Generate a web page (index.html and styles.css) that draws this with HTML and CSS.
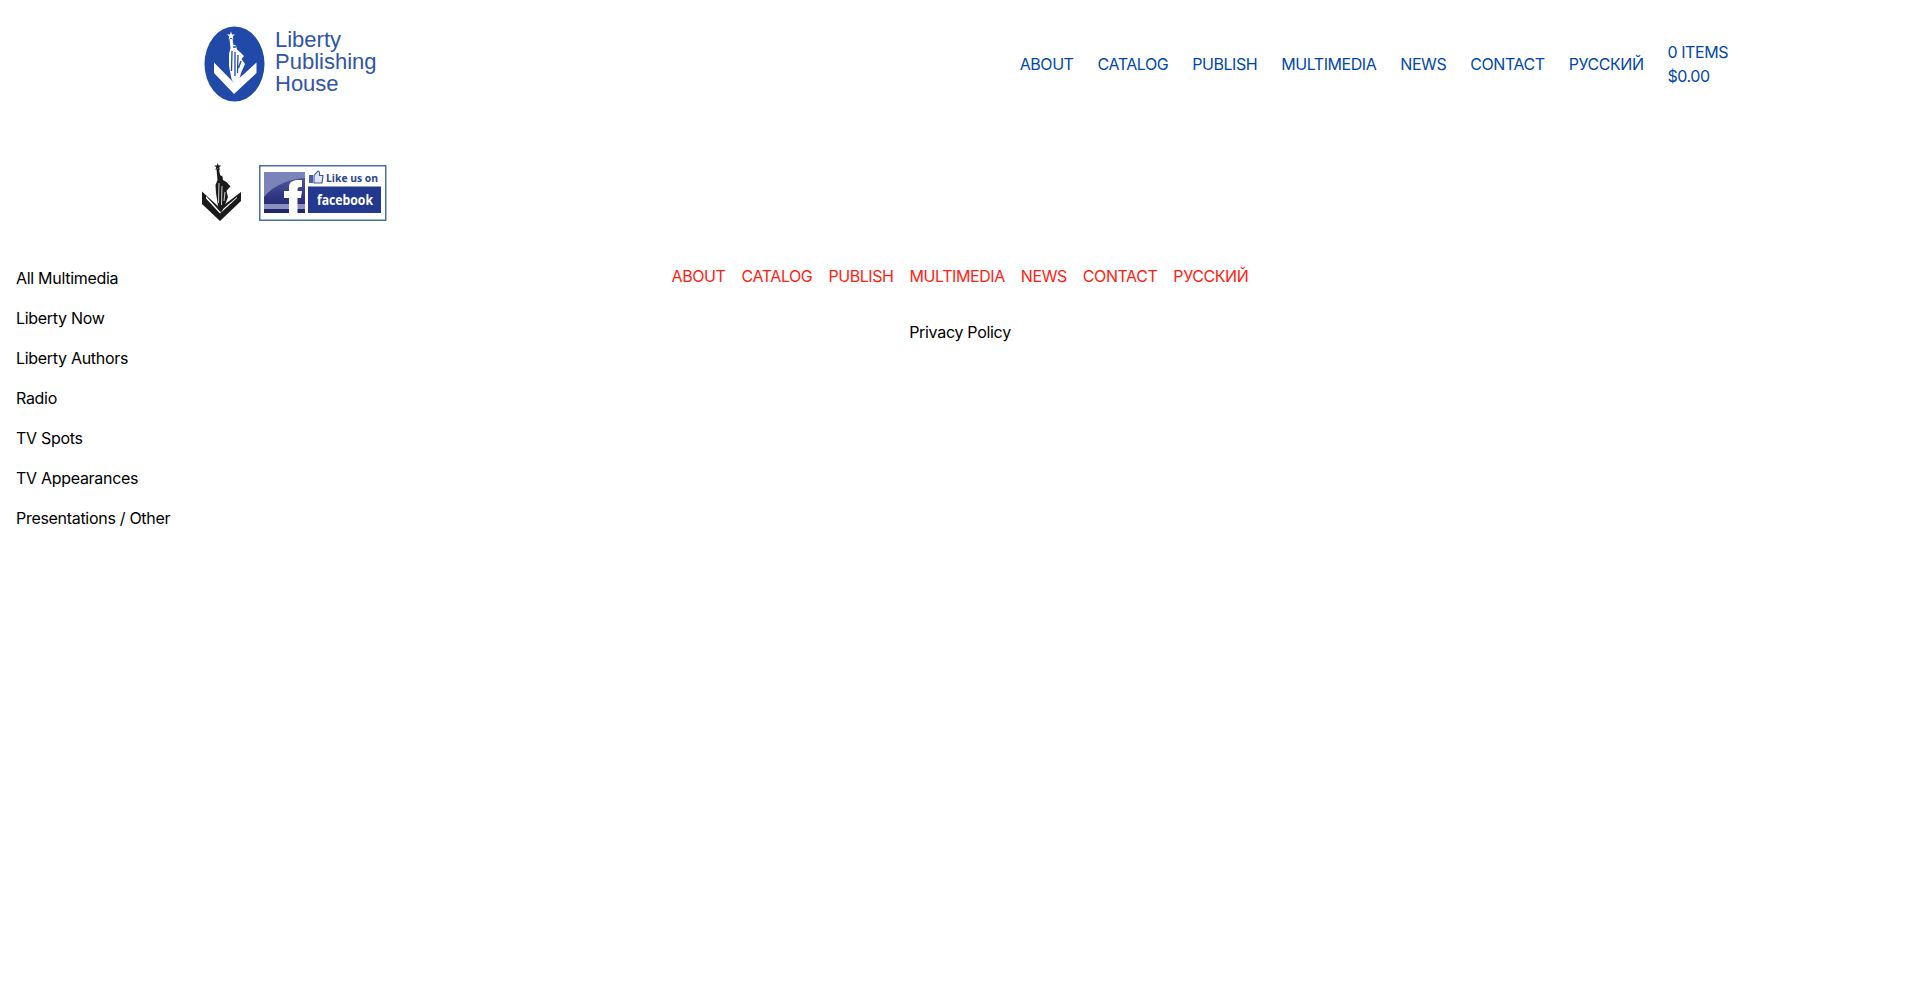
FILE: index.html
```html
<!DOCTYPE html>
<html lang="en">
<head>
<meta charset="utf-8">
<title>Liberty Publishing House</title>
<link rel="stylesheet" href="styles.css">
</head>
<body>
<header class="site-header">
  <a class="logo" href="#">
    <svg class="logo-mark" width="62" height="76" viewBox="0 0 62 76">
      <ellipse cx="30.500" cy="38" rx="30" ry="37.500" fill="#2149a8"/>
      <path d="M10 36.500 L30 57 L52.500 36.500 V47 L30 68 L10 47 Z" fill="#fff"/>
      <path d="M27 5.500 L28 8.500 L31 8.500 L28.700 10.500 L29.500 13.500 L27 11.800 L24.500 13.500 L25.300 10.500 L23 8.500 L26 8.500 Z" fill="#fff"/>
      <path d="M25.500 13 H28.500 L29.500 19 L32 19.500 L33 23.500 L36.500 26.500 L40 30 L37.500 33 L41 38 L37 47 L35.500 53 L30.500 59 L27.500 53 L25 40 L25 28 L26.500 22 Z" fill="#fff"/>
      <path d="M28 25 L27.500 45 M31 26 L31 50 M34 29 L33.500 47 M37 35 L34.500 42 M29 21 H32" stroke="#2149a8" stroke-width="1.300" fill="none"/>
    </svg>
    <span class="logo-text">Liberty<br>Publishing<br>House</span>
  </a>
  <nav class="main-nav">
    <a href="#">ABOUT</a>
    <a href="#">CATALOG</a>
    <a href="#">PUBLISH</a>
    <a href="#">MULTIMEDIA</a>
    <a href="#">NEWS</a>
    <a href="#">CONTACT</a>
    <a href="#">РУССКИЙ</a>
    <a class="cart" href="#">0 ITEMS<br>$0.00</a>
  </nav>
</header>

<section class="social">
  <svg class="mini-mark" width="42" height="58" viewBox="0 0 42 58">
    <path d="M1 28.500 L19 45 L40 29 L40 38 L19 58 L1 41 Z" fill="#1a1a1a"/>
    <path d="M5 33 L19 48.500 L36 34 L36 35 L19 50.500 L5 35.500 Z" fill="#fff"/>
    <path d="M16.700 0 L17.600 2.500 L20.300 2.500 L18.200 4.200 L19 7 L16.700 5.400 L14.400 7 L15.200 4.200 L13.100 2.500 L15.800 2.500 Z" fill="#1a1a1a"/>
    <path d="M15.500 6 H18 L19 12 L21.500 13.500 L22 17 L25.500 19 L29.500 23.500 L27 26 L25.500 28 L27 34 L24 42 L20 50 L17 43 L15 30 L14.500 22 L16.500 17 Z" fill="#1a1a1a"/>
    <path d="M18 20 L17.500 40 M21 23 L20.500 42 M24 29 L23 38" stroke="#fff" stroke-width=".8" fill="none"/>
  </svg>
  <svg class="fb-badge" width="128" height="56" viewBox="0 0 128 56">
    <defs>
      <linearGradient id="fbg" x1="0" y1="0" x2="0" y2="1">
        <stop offset="0" stop-color="#59629f"/>
        <stop offset=".6" stop-color="#2f3582"/>
        <stop offset="1" stop-color="#1f2468"/>
      </linearGradient>
    </defs>
    <rect x=".75" y=".75" width="126" height="54.500" fill="#fff" stroke="#4a6ea8" stroke-width="1.500"/>
    <rect x="5" y="7" width="41" height="41" fill="url(#fbg)"/>
    <path d="M5 7 H46 V13 C30 14 15 20 5 32 Z" fill="#7a84b8"/>
    <rect x="5" y="39" width="41" height="5" fill="#8a8fbd"/>
    <path d="M30 48 V33 H25 V26 H30 V22 C30 17 34 15 39 15 H43 V22 H41 C39 22 38.500 23 38.500 25 V26 H43 L42 33 H38.500 V48 Z" fill="#fff"/>
    <rect x="49" y="21.500" width="73" height="26.500" fill="#23398f"/>
    <rect x="50" y="10" width="4" height="8" fill="#4a5fa8"/>
    <path d="M55 18 V10.500 L59 6 Q61 6 60.500 10.500 H64 L63 18 Z" fill="#dfe6f4" stroke="#3b5a9e" stroke-width="1.100"/>
    <text class="fb-like" x="67" y="16.500" textLength="52" lengthAdjust="spacingAndGlyphs">Like us on</text>
    <text class="fb-name" x="58" y="40" textLength="56" lengthAdjust="spacingAndGlyphs">facebook</text>
  </svg>
</section>

<main class="content">
  <ul class="side-menu">
    <li><a href="#">All Multimedia</a></li>
    <li><a href="#">Liberty Now</a></li>
    <li><a href="#">Liberty Authors</a></li>
    <li><a href="#">Radio</a></li>
    <li><a href="#">TV Spots</a></li>
    <li><a href="#">TV Appearances</a></li>
    <li><a href="#">Presentations / Other</a></li>
  </ul>
  <footer class="site-footer">
    <nav class="footer-nav">
      <a href="#">ABOUT</a>
      <a href="#">CATALOG</a>
      <a href="#">PUBLISH</a>
      <a href="#">MULTIMEDIA</a>
      <a href="#">NEWS</a>
      <a href="#">CONTACT</a>
      <a href="#">РУССКИЙ</a>
    </nav>
    <a class="privacy" href="#">Privacy Policy</a>
  </footer>
  <div class="spacer"></div>
</main>
</body>
</html>
```
FILE: styles.css
```css
* { box-sizing: border-box; }
html, body { margin: 0; padding: 0; }
body {
  background: #fff;
  color: #000;
  font-family: Inter, "Liberation Sans", sans-serif;
  font-size: 16px;
  line-height: 24px;
  letter-spacing: -0.3px;
}
a { color: inherit; text-decoration: none; }

.site-header {
  display: flex;
  align-items: center;
  justify-content: space-between;
  height: 128px;
  padding: 0 192px 0 204px;
}
.logo { display: flex; align-items: center; gap: 9px; }
.logo-mark { display: block; }
.logo-text {
  font-family: "Liberation Sans", Arial, sans-serif;
  font-size: 22px;
  line-height: 22px;
  letter-spacing: 0;
  color: #2f55a8;
  padding-bottom: 4px;
}
.main-nav {
  display: flex;
  align-items: center;
  gap: 24px;
  color: #0047ab;
  letter-spacing: -0.44px;
}

.social {
  display: flex;
  align-items: center;
  gap: 16px;
  padding: 34px 0 0 201px;
}
.mini-mark, .fb-badge { display: block; }
.fb-badge { margin-top: 3px; }
.fb-like { font: 700 11px "Open Sans", "Liberation Sans", sans-serif; letter-spacing: 0; fill: #2c4391; }
.fb-name { font: 700 14px "Open Sans", "Liberation Sans", sans-serif; letter-spacing: 0; fill: #fff; }

.content {
  display: grid;
  grid-template-columns: 1fr auto 1fr;
  padding-top: 43px;
}
.side-menu {
  list-style: none;
  margin: 0;
  padding: 2px 0 0 16px;
  display: flex;
  flex-direction: column;
  gap: 16px;
}
.site-footer {
  display: flex;
  flex-direction: column;
  align-items: center;
  gap: 32px;
}
.footer-nav {
  display: flex;
  gap: 16px;
  color: #ff2212;
  letter-spacing: -0.42px;
}
```
